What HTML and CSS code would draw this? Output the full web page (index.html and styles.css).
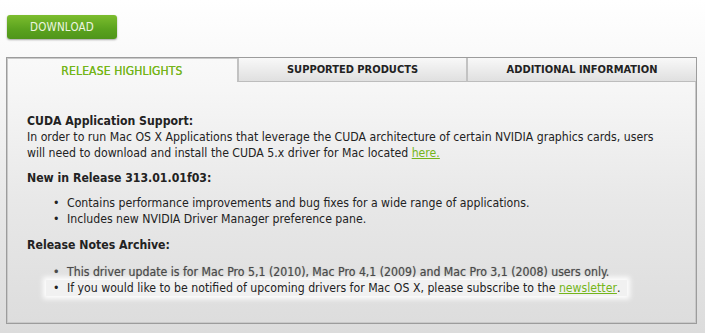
FILE: index.html
```html
<!DOCTYPE html>
<html>
<head>
<meta charset="utf-8">
<link rel="stylesheet" href="styles.css">
</head>
<body>
<div class="page">
  <a class="btn" href="#">DOWNLOAD</a>
  <div class="panel">
    <div class="tabs">
      <div class="tab active">RELEASE HIGHLIGHTS</div>
      <div class="tab">SUPPORTED PRODUCTS</div>
      <div class="tab">ADDITIONAL INFORMATION</div>
    </div>
    <div class="content">
      <p class="h">CUDA Application Support:</p>
      <p class="para">In order to run Mac OS X Applications that leverage the CUDA architecture of certain NVIDIA graphics cards, users will need to download and install the CUDA 5.x driver for Mac located <a href="#">here.</a></p>
      <p class="h">New in Release 313.01.01f03:</p>
      <ul>
        <li>Contains performance improvements and bug fixes for a wide range of applications.</li>
        <li>Includes new NVIDIA Driver Manager preference pane.</li>
      </ul>
      <p class="h">Release Notes Archive:</p>
      <ul class="last">
        <li class="faded">This driver update is for Mac Pro 5,1 (2010), Mac Pro 4,1 (2009) and Mac Pro 3,1 (2008) users only.</li>
        <li class="glow">If you would like to be notified of upcoming drivers for Mac OS X, please subscribe to the&nbsp;<a href="#">newsletter</a>.</li>
      </ul>
    </div>
  </div>
</div>
</body>
</html>
```

FILE: styles.css
```css
html, body {
  margin: 0;
  padding: 0;
  height: 100%;
}
body {
  background: linear-gradient(#ffffff 0px, #f6f6f6 90px, #e8e8e8 200px, #dcdcdc 333px);
  font-family: "DejaVu Sans Condensed", "DejaVu Sans", sans-serif;
  font-stretch: condensed;
  font-size: 12.2px;
  line-height: 16px;
  color: #222;
}
.page {
  padding: 15px 8px 0 6px;
}
.btn {
  display: flex;
  align-items: center;
  justify-content: center;
  width: 110px;
  height: 24px;
  margin-left: 1px;
  border-radius: 3px;
  background: linear-gradient(#7cbd2e, #5aa21e 60%, #4f951a);
  box-shadow: 0 1px 2px rgba(0,0,0,0.35);
  color: #eef5e0;
  text-decoration: none;
  font-size: 11.5px;
  letter-spacing: 0.2px;
}
.panel {
  margin-top: 18px;
  width: 689px;
  height: 265px;
  border: 1px solid #9c9c9c;
  box-shadow: inset 0 0 0 1px #c9c9c9;
}
.tabs {
  display: grid;
  grid-template-columns: 230px 229px 230px;
  height: 24px;
}
.tab {
  display: flex;
  align-items: center;
  justify-content: center;
  font-size: 11px;
  font-weight: bold;
  color: #222;
  background: linear-gradient(#f8f8f8, #e0e0e0);
  border-left: 2px solid #c2c2c2;
  border-bottom: 1px solid #bdbdbd;
  padding-top: 1px;
}
.tab.active {
  background: transparent;
  border-left: none;
  border-bottom: none;
  color: #74b51a;
  font-size: 12px;
  font-weight: normal;
  letter-spacing: 0.15px;
  text-shadow: 0 0 0.4px #74b51a;
}
.content {
  padding: 31px 30px 0 20px;
}
.content p {
  margin: 0;
}
.h {
  font-weight: bold;
}
.para {
  margin-bottom: 9px !important;
}
ul {
  list-style: none;
  margin: 9px 0 10px 0;
  padding-left: 26px;
}
ul.last {
  margin-top: 11px;
}
li {
  display: flex;
}
li::before {
  content: "\2022";
  width: 14px;
  flex: none;
  text-align: left;
}
a {
  color: #74b51a;
}
.faded {
  color: #4a4a4a;
  text-shadow: 0 0 1px rgba(0,0,0,0.35);
}
.glow {
  width: fit-content;
  margin-left: -7px;
  padding: 0 7px;
  background: rgba(255,255,255,0.55);
  box-shadow: 0 0 5px 3px rgba(255,255,255,0.95);
}
```
